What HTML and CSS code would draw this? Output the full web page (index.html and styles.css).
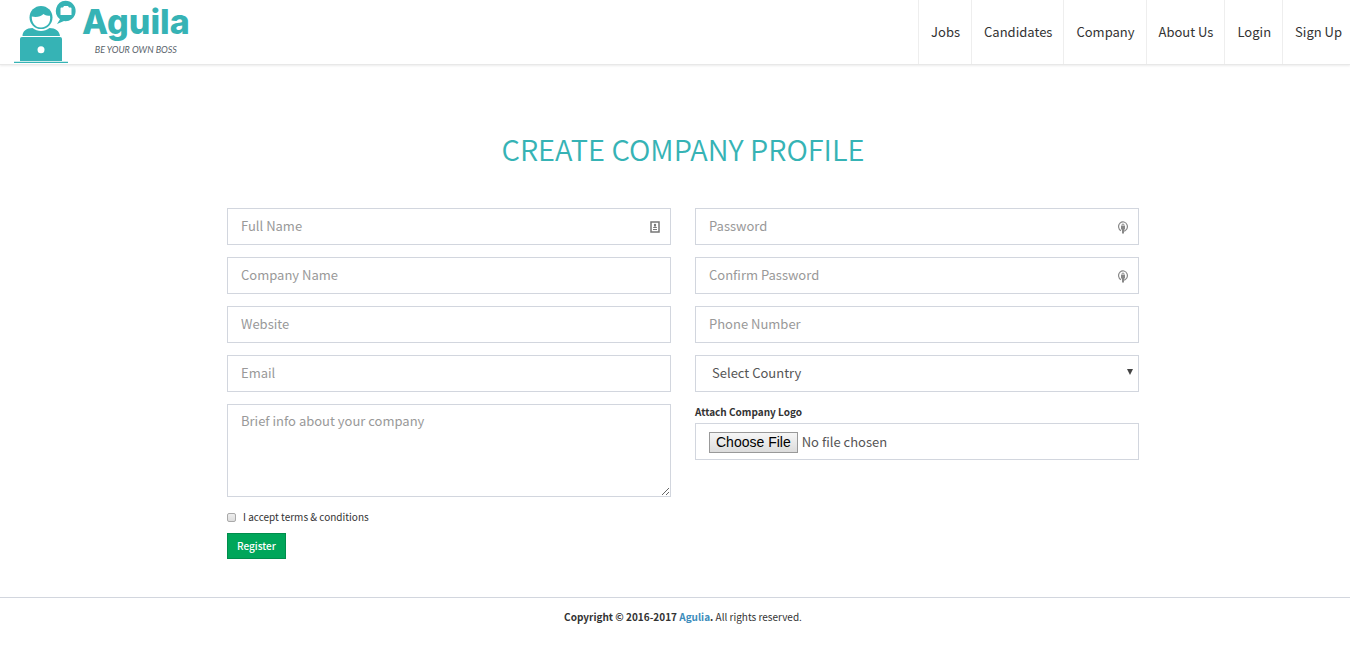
FILE: index.html
```html
<!DOCTYPE html>
<html lang="en">
<head>
  <meta charset="UTF-8">
  <meta name="viewport" content="width=device-width, initial-scale=1.0">
  <title>Aguila | Create Company Profile</title>
  <link rel="stylesheet" href="styles.css">
</head>
<body>
  <header class="header">
    <a href="#" class="logo">
      <svg class="logo-icon" width="64" height="64" viewBox="0 0 64 64" aria-hidden="true">
        <g fill="#36b3b5">
          <path d="M8.500 36c0-5 4-8 10-8 5 4 12 4 17 0 6 0 10 3 10.500 8z"/>
          <path d="M8 37h38a2 2 0 0 1 2 2v22H6V39a2 2 0 0 1 2-2z"/>
          <path d="M0 61.700h54v1.300H0z"/>
          <circle cx="27" cy="17.500" r="11.500"/>
          <path d="M51.500 .8a10.200 10.200 0 1 1-1.500 20.300L43 24l3-4.800A10.200 10.200 0 0 1 51.500 .8z"/>
        </g>
        <path fill="#fff" d="M17.800 16.500c5 1 9 0 11.700-2.500 2 1.500 4 1.800 6.500 1.800 1.200 7-3 11.700-9 11.700s-9.500-5-9.200-11z"/>
        <path fill="#fff" d="M46.500 8.500a1 1 0 0 1 1-1h1.500L50 6h4l1 1.500h1.500a1 1 0 0 1 1 1V15h-11z"/>
        <circle cx="27" cy="49.700" r="3.500" fill="#fff"/>
      </svg>
      <span class="logo-text">
        <span class="logo-name">Aguila</span>
        <span class="logo-slogan">BE YOUR OWN BOSS</span>
      </span>
    </a>
    <nav class="nav">
      <a href="#">Jobs</a>
      <a href="#">Candidates</a>
      <a href="#">Company</a>
      <a href="#">About Us</a>
      <a href="#">Login</a>
      <a href="#">Sign Up</a>
    </nav>
  </header>

  <main class="main">
    <h1>CREATE COMPANY PROFILE</h1>
    <form class="form">
      <div class="column">
        <div class="field">
          <input type="text" class="control" placeholder="Full Name" aria-label="Full Name">
          <svg class="field-icon" width="10" height="12" viewBox="0 0 10 12" aria-hidden="true">
            <rect x="1" y="1" width="8" height="10" fill="#fff" stroke="#777" stroke-width="1.500"/>
            <circle cx="5" cy="4" r="1.200" fill="#777"/>
            <path d="M3 7c0-2 4-2 4 0zM3 8h4v1H3z" fill="#777"/>
          </svg>
        </div>
        <input type="text" class="control" placeholder="Company Name" aria-label="Company Name">
        <input type="text" class="control" placeholder="Website" aria-label="Website">
        <input type="email" class="control" placeholder="Email" aria-label="Email">
        <textarea class="control textarea" placeholder="Brief info about your company" aria-label="Brief info about your company"></textarea>
        <div class="actions">
          <label class="terms"><input type="checkbox"> I accept terms &amp; conditions</label>
          <button type="submit" class="btn">Register</button>
        </div>
      </div>
      <div class="column">
        <div class="field">
          <input type="password" class="control" placeholder="Password" aria-label="Password">
          <svg class="field-icon" width="10" height="13" viewBox="0 0 10 13" aria-hidden="true">
            <path d="M3 9.800A4.400 4.700 0 1 1 5 10.300" fill="none" stroke="#888" stroke-width="1.200"/>
            <path d="M3 5h4v3.500H3zM4 8.500h2v4H4z" fill="#888"/>
            <path d="M4 5V4a1 1 0 0 1 2 0v1" fill="none" stroke="#888"/>
          </svg>
        </div>
        <div class="field">
          <input type="password" class="control" placeholder="Confirm Password" aria-label="Confirm Password">
          <svg class="field-icon" width="10" height="13" viewBox="0 0 10 13" aria-hidden="true">
            <path d="M3 9.800A4.400 4.700 0 1 1 5 10.300" fill="none" stroke="#888" stroke-width="1.200"/>
            <path d="M3 5h4v3.500H3zM4 8.500h2v4H4z" fill="#888"/>
            <path d="M4 5V4a1 1 0 0 1 2 0v1" fill="none" stroke="#888"/>
          </svg>
        </div>
        <input type="tel" class="control" placeholder="Phone Number" aria-label="Phone Number">
        <div class="field">
          <select class="control select" aria-label="Country">
            <option>Select Country</option>
          </select>
          <svg class="select-arrow" width="6" height="6" viewBox="0 0 6 6" aria-hidden="true">
            <path d="M0 0h6L3 6z" fill="#444"/>
          </svg>
        </div>
        <div class="upload">
          <label for="logo">Attach Company Logo</label>
          <input type="file" id="logo" class="control file">
        </div>
      </div>
    </form>
  </main>

  <footer class="footer">
    <strong>Copyright © 2016-2017 <a href="#">Agulia</a>.</strong> All rights reserved.
  </footer>
</body>
</html>
```
FILE: styles.css
```css
* {
  box-sizing: border-box;
}
body {
  margin: 0;
  font-family: "Noto Sans CJK SC", "Noto Sans", sans-serif;
  font-size: 10px;
  line-height: 16px;
  color: #333;
  background: #fff;
}
a {
  text-decoration: none;
}

/* header */
.header {
  display: flex;
  justify-content: space-between;
  height: 65px;
  border-bottom: 1px solid #e8e8e8;
  box-shadow: 0 1px 2px rgba(0, 0, 0, 0.08);
}
.logo {
  display: flex;
  gap: 4px;
  padding-left: 14px;
}
.logo-text {
  display: flex;
  flex-direction: column;
  align-items: center;
  padding-top: 2px;
}
.logo-name {
  font-family: Inter, Lato, sans-serif;
  font-size: 34px;
  font-weight: 800;
  line-height: 40px;
  color: #36b3b5;
}
.logo-slogan {
  font-family: Lato, sans-serif;
  font-size: 9px;
  font-style: italic;
  line-height: 16px;
  color: #59636b;
}
.nav {
  display: flex;
}
.nav a {
  padding: 0 11px 0 12px;
  border-left: 1px solid #eee;
  font-size: 13px;
  line-height: 64px;
  color: #333;
}
.nav a:last-child {
  padding-right: 8px;
}

/* form */
.main {
  padding: 63px 0 38px 16px;
}
h1 {
  margin: 0 0 40px;
  font-size: 29px;
  font-weight: 350;
  line-height: 40px;
  text-align: center;
  color: #36b3b5;
}
.form {
  display: grid;
  grid-template-columns: 1fr 1fr;
  gap: 24px;
  max-width: 912px;
  margin: 0 auto;
}
.column {
  display: flex;
  flex-direction: column;
  gap: 12px;
}
.field {
  position: relative;
}
.control {
  display: block;
  width: 100%;
  height: 37px;
  margin: 0;
  padding: 5px 13px 7px;
  border: 1px solid #d2d6de;
  border-radius: 0;
  background: #fff;
  font-family: inherit;
  font-size: 13px;
  line-height: 22px;
  color: #555;
}
.control::placeholder {
  color: #999;
}
.field-icon {
  position: absolute;
  top: 13px;
  right: 11px;
}
.select {
  appearance: none;
  padding-left: 16px;
}
.select-arrow {
  position: absolute;
  top: 14px;
  right: 6px;
}
.textarea {
  height: 93px;
  resize: vertical;
}
.upload label {
  display: block;
  margin-bottom: 3px;
  font-weight: 700;
}
.file {
  padding-top: 7px;
  padding-bottom: 5px;
}
.file::file-selector-button {
  height: 21px;
  margin: 0 4px 0 0;
  padding: 0 6px;
  border: 1px solid #999;
  border-radius: 0;
  background: linear-gradient(#f6f6f6, #dcdcdc);
  font-family: "Liberation Sans", Arial, sans-serif;
  font-size: 14px;
  line-height: 18px;
  color: #000;
}
.actions {
  display: flex;
  flex-direction: column;
  gap: 8px;
}
.terms {
  display: flex;
  align-items: center;
  gap: 7px;
}
.terms input {
  appearance: none;
  width: 9px;
  height: 9px;
  margin: 0;
  border: 1px solid #aaa;
  border-radius: 2px;
  background: linear-gradient(#eee, #ddd);
}
.terms input:checked {
  background: #00a65a;
}
.btn {
  align-self: flex-start;
  height: 26px;
  padding: 0 9px 2px;
  border: 1px solid #008d4c;
  background: #00a65a;
  font-family: inherit;
  font-size: 10px;
  font-weight: 500;
  color: #fff;
  cursor: pointer;
}

/* footer */
.footer {
  padding: 11px 0 12px 16px;
  border-top: 1px solid #d2d6de;
  text-align: center;
}
.footer a {
  color: #3c8dbc;
}
```
